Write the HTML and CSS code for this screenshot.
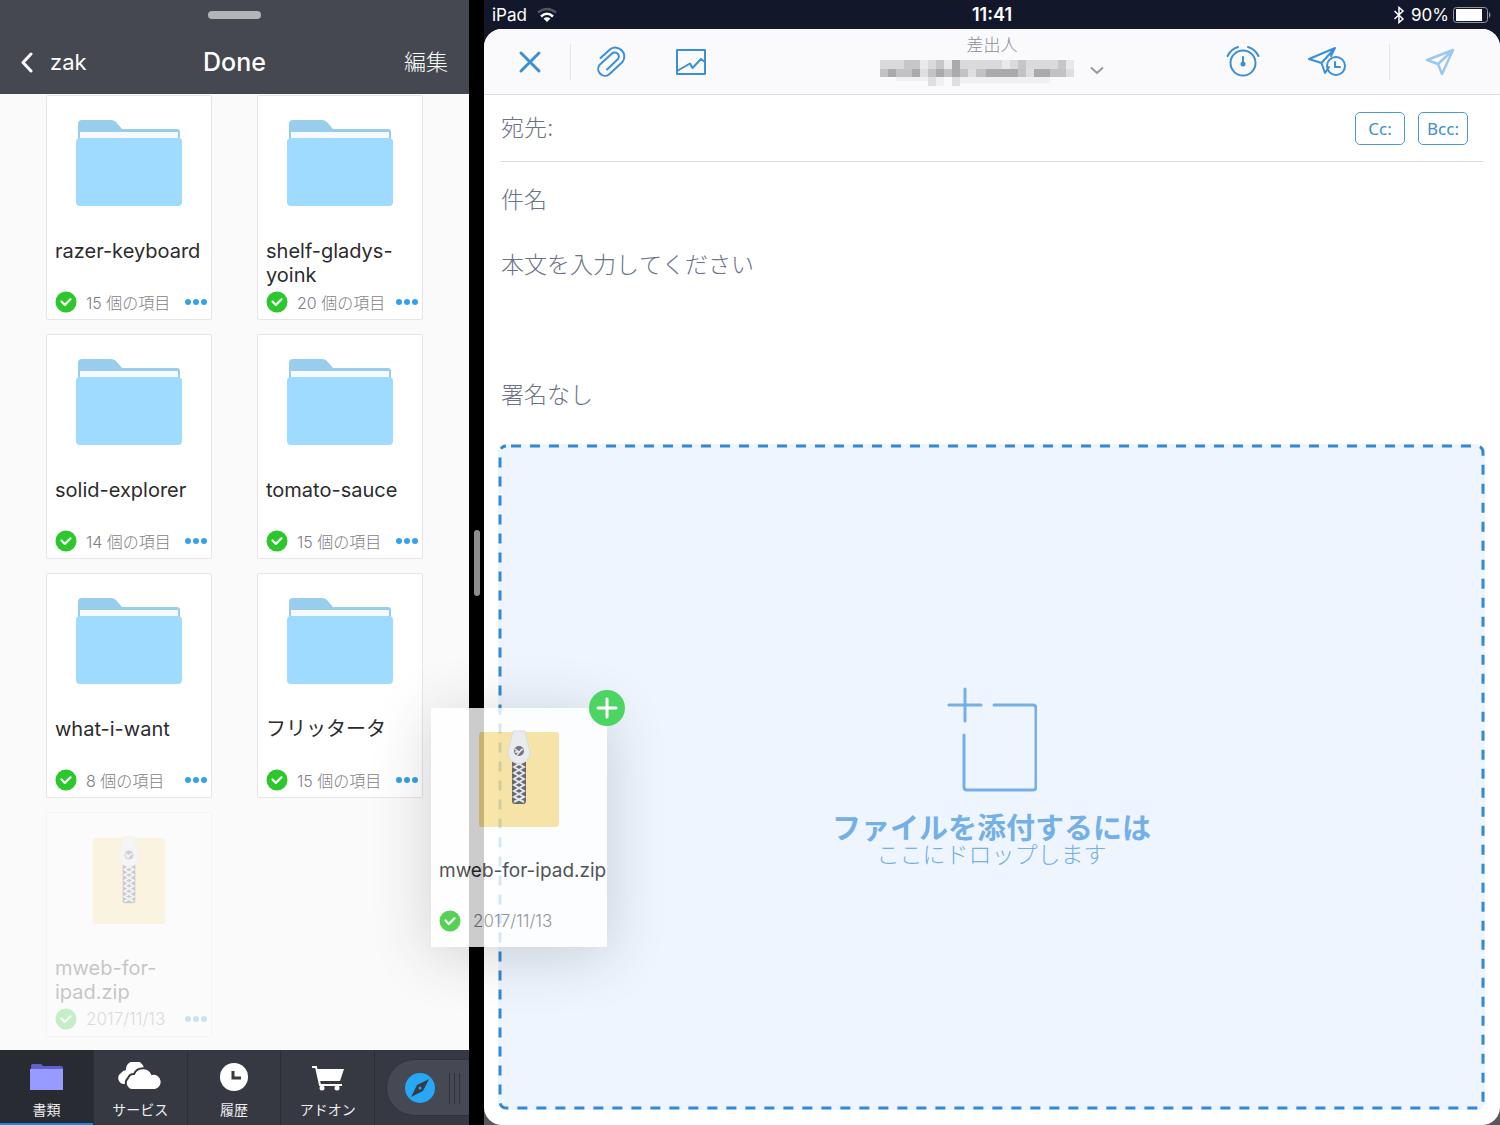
FILE: index.html
```html
<!DOCTYPE html>
<html lang="ja">
<head>
<meta charset="utf-8">
<meta name="viewport" content="width=device-width, initial-scale=1">
<title>Done</title>
<link rel="stylesheet" href="styles.css">
</head>
<body>
<svg class="defs" aria-hidden="true">
  <symbol id="folder" viewBox="0 0 106 86">
    <path fill="#98cdee" d="M2 18V4Q2 0 6 0H35Q38 0 40 2L46 9H101Q104 9 104 12V22H2Z"/>
    <path fill="#f6f9fd" d="M4 12H102V19H4Z"/>
    <rect y="18" width="106" height="68" rx="4" fill="#9fdbff"/>
  </symbol>
  <symbol id="check" viewBox="0 0 22 22">
    <circle cx="11" cy="11" r="10.500" fill="#2cc72d"/>
    <path d="M6.500 10.500l3.300 3.400 5.700-5.600" fill="none" stroke="#fff" stroke-width="2.200" stroke-linecap="round" stroke-linejoin="round"/>
  </symbol>
  <symbol id="dots" viewBox="0 0 22 6">
    <circle cx="3" cy="3" r="3"/><circle cx="11" cy="3" r="3"/><circle cx="19" cy="3" r="3"/>
  </symbol>
  <symbol id="zip" viewBox="0 0 80 97">
    <rect y="2" width="80" height="95" rx="3" fill="#f8df92"/>
    <rect x="33" y="24" width="14" height="50" rx="3" fill="#45454b"/>
    <path d="M35 31l10 6-10 6 10 6-10 6 10 6-10 6 10 5M45 31l-10 6 10 6-10 6 10 6-10 6 10 6-10 5" fill="none" stroke="#e3e3e8" stroke-width="2"/>
    <path d="M34 1H46L50 18A11 11 0 1 1 30 18Z" fill="#e9e9eb" stroke="#d8d5cf" stroke-width="1"/>
    <circle cx="40" cy="21" r="5" fill="#55565c"/>
    <path d="M36 19l4 3 4-3M38 25l5-6M36 22h4" stroke="#e9e9eb" stroke-width="1.500" fill="none"/>
  </symbol>
</svg>

<div class="split">
  <section class="files">
    <header class="files-header">
      <span class="grabber"></span>
      <div class="files-nav">
        <a class="back" href="#">
          <svg width="13" height="21" viewBox="0 0 13 21" fill="none" stroke="#fff" stroke-width="3" stroke-linecap="round" stroke-linejoin="round"><path d="M10 2L2 10.500L10 19"/></svg>
          <span>zak</span>
        </a>
        <h1>Done</h1>
        <button class="edit" type="button">編集</button>
      </div>
    </header>

    <main class="grid">
      <article class="card">
        <svg class="thumb"><use href="#folder"/></svg>
        <h2 class="name">razer-keyboard</h2>
        <div class="meta"><svg class="check"><use href="#check"/></svg><span class="count">15 個の項目</span><button class="more" type="button" aria-label="その他"><svg class="dots"><use href="#dots"/></svg></button></div>
      </article>
      <article class="card">
        <svg class="thumb"><use href="#folder"/></svg>
        <h2 class="name">shelf-gladys-yoink</h2>
        <div class="meta"><svg class="check"><use href="#check"/></svg><span class="count">20 個の項目</span><button class="more" type="button" aria-label="その他"><svg class="dots"><use href="#dots"/></svg></button></div>
      </article>
      <article class="card">
        <svg class="thumb"><use href="#folder"/></svg>
        <h2 class="name">solid-explorer</h2>
        <div class="meta"><svg class="check"><use href="#check"/></svg><span class="count">14 個の項目</span><button class="more" type="button" aria-label="その他"><svg class="dots"><use href="#dots"/></svg></button></div>
      </article>
      <article class="card">
        <svg class="thumb"><use href="#folder"/></svg>
        <h2 class="name">tomato-sauce</h2>
        <div class="meta"><svg class="check"><use href="#check"/></svg><span class="count">15 個の項目</span><button class="more" type="button" aria-label="その他"><svg class="dots"><use href="#dots"/></svg></button></div>
      </article>
      <article class="card">
        <svg class="thumb"><use href="#folder"/></svg>
        <h2 class="name">what-i-want</h2>
        <div class="meta"><svg class="check"><use href="#check"/></svg><span class="count">8 個の項目</span><button class="more" type="button" aria-label="その他"><svg class="dots"><use href="#dots"/></svg></button></div>
      </article>
      <article class="card">
        <svg class="thumb"><use href="#folder"/></svg>
        <h2 class="name">フリッタータ</h2>
        <div class="meta"><svg class="check"><use href="#check"/></svg><span class="count">15 個の項目</span><button class="more" type="button" aria-label="その他"><svg class="dots"><use href="#dots"/></svg></button></div>
      </article>
      <article class="card lifted">
        <svg class="thumb"><use href="#zip"/></svg>
        <h2 class="name">mweb-for-ipad.zip</h2>
        <div class="meta"><svg class="check"><use href="#check"/></svg><span class="count date">2017/11/13</span><button class="more" type="button" aria-label="その他"><svg class="dots"><use href="#dots"/></svg></button></div>
      </article>
    </main>

    <nav class="tabs">
      <a class="tab active" href="#">
        <svg width="44" height="30" viewBox="0 0 44 30"><path fill="#5f61cd" d="M7 8V4Q7 2 9 2H17L19 4H37Q39 4 39 6V8Z"/><path fill="#979bff" d="M6 7H39V28H6Z"/></svg>
        <span>書類</span>
      </a>
      <a class="tab" href="#">
        <svg width="44" height="30" viewBox="0 0 44 30"><path fill="#fff" d="M11 22H7A6 6 0 0 1 3 11A7 7 0 0 1 8 8A9 8 0 0 1 26 6L11 22Z"/><path fill="#fff" stroke="#363942" stroke-width="2" d="M14 28A7 7 0 0 1 10 16A6 6 0 0 1 16 12A10 10 0 0 1 34 12A8 8 0 0 1 37 28Z"/></svg>
        <span>サービス</span>
      </a>
      <a class="tab" href="#">
        <svg width="44" height="30" viewBox="0 0 44 30"><circle cx="22" cy="15" r="14" fill="#fff"/><path d="M21 9V16H29" fill="none" stroke="#363942" stroke-width="3"/></svg>
        <span>履歴</span>
      </a>
      <a class="tab" href="#">
        <svg width="44" height="30" viewBox="0 0 44 30"><path d="M6 5H10L14 23H36" fill="none" stroke="#fff" stroke-width="2"/><path fill="#fff" d="M10 7H38L34 19H13Z"/><circle cx="16" cy="26" r="2.500" fill="#fff"/><circle cx="31" cy="26" r="2.500" fill="#fff"/></svg>
        <span>アドオン</span>
      </a>
      <div class="browser">
        <button class="pill" type="button" aria-label="ブラウザ">
          <svg width="80" height="32" viewBox="0 0 80 32"><circle cx="16" cy="16" r="15" fill="#26a8f4"/><path fill="#363b45" fill-rule="evenodd" d="M25 7L19 19L7 25L13 13ZM16 14.500a1.500 1.500 0 1 0 0 3a1.500 1.500 0 0 0 0-3"/><path d="M45.500 1V32M50.500 1V32M55.500 1V32" stroke="#2e3139" stroke-width="1"/></svg>
        </button>
      </div>
    </nav>
  </section>

  <div class="divider"><span class="handle"></span></div>

  <section class="mail">
    <div class="status">
      <div class="status-left">
        <span>iPad</span>
        <svg width="20" height="16" viewBox="0 0 20 16" fill="none" stroke-width="2.500"><path d="M1 5.500Q10-1.500 19 5.500" stroke="#525665"/><path d="M4 9.500Q10 4 16 9.500" stroke="#fff"/><path fill="#fff" d="M6.500 11.500Q10 9 13.500 11.500L10 15Z"/></svg>
      </div>
      <strong>11:41</strong>
      <div class="status-right">
        <svg width="12" height="18" viewBox="0 0 12 18" fill="none" stroke="#fff" stroke-width="1.500"><path d="M1.500 5L10 13L6 16.500V1.500L10 5L1.500 13"/></svg>
        <span>90%</span>
        <svg width="40" height="18" viewBox="0 0 40 18"><rect x="1.500" y="1.500" width="34" height="15" rx="3" fill="none" stroke="#9496a0" stroke-width="1"/><rect x="4" y="3" width="26" height="12" fill="#fff"/><path fill="#9496a0" d="M37 6Q40 9 37 12Z"/></svg>
      </div>
    </div>

    <form class="sheet">
      <header class="toolbar">
        <div class="tools">
          <button class="tool close" type="button" aria-label="閉じる"><svg width="24" height="24" viewBox="0 0 24 24"><path stroke-width="3" d="M3 3L21 21M21 3L3 21"/></svg></button>
          <button class="tool clip" type="button" aria-label="添付"><svg width="32" height="34" viewBox="0 0 32 34"><path d="M5.500 13L15.500 4A9 9 0 0 1 27.500 17L14 29.500A6.800 6.800 0 0 1 4.500 20L17 8.500A4 4 0 0 1 22.500 14.500L12 24.500"/></svg></button>
          <button class="tool picture" type="button" aria-label="画像"><svg width="32" height="26" viewBox="0 0 32 26"><path d="M2 1H30V25H2ZM2 22L15 14.500L17.500 19L26 10L30 13"/></svg></button>
        </div>
        <div class="sender">
          <span class="sender-label">差出人</span>
          <button class="sender-address" type="button" aria-label="差出人を変更">
            <svg width="194" height="26" viewBox="0 0 194 26" shape-rendering="crispEdges">
              <path fill="#dadadc" d="M0 0H194V9H0Z"/>
              <path fill="#c2c2c4" d="M0 9H194V17H0Z"/>
              <path fill="#c6c6c8" d="M24 0h16v9h-16zM56 0h8v9h-8zM72 0h8v9h-8zM138 0h8v9h-8zM178 0h8v9h-8z"/>
              <path fill="#e9e9eb" d="M40 0h8v9h-8zM64 0h8v9h-8zM122 0h8v9h-8zM186 0h8v9h-8z"/>
              <path fill="#aaaaac" d="M8 9h8v8h-8zM32 9h8v8h-8zM56 9h8v8h-8zM72 0h8v17h-8zM106 9h32v8h-32zM154 9h16v8h-16z"/>
              <path fill="#dededf" d="M40 9h8v8h-8zM88 9h8v8h-8zM146 9h8v8h-8zM186 9h8v8h-8zM48 17h8v9h-8zM72 17h8v9h-8z"/>
              <path fill="#f0f0f2" d="M16 17h32v4h-32zM56 17h8v9h-8zM80 17h90v6h-90z"/>
            </svg>
            <svg class="chevron" width="14" height="9" viewBox="0 0 14 9" fill="none" stroke="#96979d" stroke-width="2"><path d="M1 1.500L7 7L13 1.500"/></svg>
          </button>
        </div>
        <div class="tools tools-end">
          <button class="tool alarm" type="button" aria-label="リマインダー"><svg width="34" height="34" viewBox="0 0 34 34"><circle cx="17" cy="18" r="12.500"/><path d="M1.500 11Q5 4 12 2M22 2Q29 4 32.500 11M17 12V19"/><circle cx="17" cy="19" r="1.500" fill="#3a8fd6"/></svg></button>
          <button class="tool later" type="button" aria-label="後で送信"><svg width="40" height="32" viewBox="0 0 40 32"><path d="M18 27L14.500 17L2 13L28 2L24 10M14.500 17L28 2M18 27L22 21"/><circle cx="29" cy="20" r="9"/><path d="M28 16V21H33"/></svg></button>
          <button class="tool send" type="submit" aria-label="送信" disabled><svg width="30" height="30" viewBox="0 0 30 30"><path stroke-width="2.500" d="M2 13L28 3L17 27L13 17ZM13 17L28 3"/></svg></button>
        </div>
      </header>

      <div class="to-row">
        <label for="to">宛先:</label>
        <input id="to" type="text">
        <button class="cc" type="button">Cc:</button>
        <button class="cc" type="button">Bcc:</button>
      </div>
      <input class="subject" type="text" placeholder="件名" aria-label="件名">
      <textarea class="message" placeholder="本文を入力してください" aria-label="本文"></textarea>
      <p class="signature">署名なし</p>

      <div class="dropzone">
        <svg class="outline" aria-hidden="true"><rect class="outline-rect" x="2" y="2" rx="6"/></svg>
        <svg width="90" height="105" viewBox="0 0 90 105" fill="none" stroke="#74b0e6" stroke-width="3" stroke-linecap="round"><path d="M2 18H34M18 2V34M47 18H86Q89 18 89 21V100Q89 103 86 103H20Q17 103 17 100V48"/></svg>
        <strong>ファイルを添付するには</strong>
        <span>ここにドロップします</span>
      </div>
    </form>
  </section>

  <div class="drag">
    <article class="drag-card">
      <svg class="drag-thumb"><use href="#zip"/></svg>
      <h2 class="name">mweb-for-ipad.zip</h2>
      <div class="meta"><svg class="check"><use href="#check"/></svg><span class="count date">2017/11/13</span></div>
    </article>
    <svg class="plus" viewBox="0 0 36 36"><circle cx="18" cy="18" r="18" fill="#4cd562"/><path d="M18 9V27M9 18H27" stroke="#fff" stroke-width="3" stroke-linecap="round"/></svg>
  </div>
</div>
</body>
</html>
```
FILE: styles.css
```css
* {
  box-sizing: border-box;
}

body {
  margin: 0;
  font-family: Inter, "Noto Sans CJK JP", sans-serif;
  background: #000;
}

h1, h2, p {
  margin: 0;
  font-weight: 400;
}

button {
  padding: 0;
  border: 0;
  background: none;
  font-family: inherit;
  color: inherit;
}

a {
  color: inherit;
  text-decoration: none;
}

svg {
  display: block;
  flex: none;
}

.defs {
  position: absolute;
  width: 0;
  height: 0;
}

.split {
  position: relative;
  display: grid;
  grid-template-columns: 469fr 15px 1016fr;
  min-height: 100vh;
  overflow: hidden;
}

/* File browser */

.files {
  display: flex;
  flex-direction: column;
  min-width: 0;
  background: #fafafb;
}

.files-header {
  display: flex;
  flex-direction: column;
  align-items: center;
  height: 94px;
  padding-top: 11px;
  background: #454850;
  color: #fff;
}

.grabber {
  width: 53px;
  height: 8px;
  border-radius: 4px;
  background: #b4b5b9;
}

.files-nav {
  display: grid;
  grid-template-columns: 1fr auto 1fr;
  align-items: center;
  align-self: stretch;
  padding: 27px 21px 0;
  line-height: 32px;
}

.back {
  display: flex;
  align-items: center;
  gap: 16px;
  font-size: 22px;
}

.files-nav h1 {
  font-size: 25px;
  font-weight: 500;
}

.edit {
  justify-self: end;
  font-size: 22px;
  font-weight: 300;
  line-height: 30px;
}

.grid {
  flex: 1;
  display: grid;
  grid-template-columns: 1fr 1fr;
  align-content: start;
  gap: 14px 45px;
  padding: 1px 46px 13px;
}

.card {
  display: flex;
  flex-direction: column;
  height: 225px;
  padding: 23px 8px 5px;
  border: 1px solid #e6e6e8;
  border-radius: 2px;
  background: #fff;
}

.lifted {
  opacity: 0.25;
}

.thumb {
  align-self: center;
  width: 106px;
  height: 88px;
  margin-bottom: 32px;
}

.name {
  height: 52px;
  font-size: 20px;
  line-height: 24px;
  color: #2b2b2d;
}

.meta {
  display: flex;
  align-items: center;
  height: 22px;
  margin-right: -4px;
  font-size: 16px;
  font-weight: 300;
  color: #7e7e82;
}

.check {
  width: 22px;
  height: 22px;
  margin-right: 9px;
}

.count {
  flex: 1;
  white-space: nowrap;
}

.date {
  font-size: 17px;
}

.dots {
  width: 22px;
  height: 6px;
  fill: #38a0e8;
}

.tabs {
  display: grid;
  grid-template-columns: repeat(5, 1fr);
  height: 75px;
  background: #363942;
}

.tab {
  display: flex;
  flex-direction: column;
  align-items: center;
  gap: 8px;
  padding-top: 12px;
  border-right: 1px solid #2b2e36;
  font-size: 14px;
  line-height: 20px;
  color: #eee;
}

.active {
  background: #282b32;
  box-shadow: inset 0 -2px #1e88dc;
}

.browser {
  min-width: 0;
  overflow: hidden;
  padding: 9px 0 9px 11px;
}

.pill {
  width: 120px;
  height: 57px;
  padding-left: 17px;
  border: 1px solid #30333b;
  border-radius: 29px;
  background: #454954;
}

/* Split view divider */

.divider {
  display: flex;
  align-items: center;
  justify-content: center;
  background: #000;
}

.handle {
  width: 6px;
  height: 66px;
  border-radius: 3px;
  background: #8e8e90;
}

/* Mail composer */

.mail {
  display: flex;
  flex-direction: column;
  min-width: 0;
  background: linear-gradient(#12172a 60px, #5b565c 60px);
}

.status {
  display: grid;
  grid-template-columns: 1fr auto 1fr;
  align-items: center;
  height: 29px;
  padding: 0 8px;
  font-size: 17px;
  color: #fff;
}

.status strong {
  font-size: 18px;
  font-weight: 600;
}

.status-left,
.status-right {
  display: flex;
  align-items: center;
  gap: 10px;
}

.status-right {
  justify-content: end;
  gap: 6px;
}

.status-right span + svg {
  margin-left: -3px;
}

.sheet {
  flex: 1;
  display: flex;
  flex-direction: column;
  overflow: hidden;
  border-radius: 18px;
  background: #fff;
}

.toolbar {
  display: grid;
  grid-template-columns: 1fr auto 1fr;
  align-items: center;
  height: 66px;
  border-bottom: 1px solid #dcdce0;
  background: #fafafc;
}

.tools {
  display: flex;
  align-items: center;
  padding-left: 16px;
}

.tools-end {
  justify-content: end;
  padding: 0 30px 0 0;
}

.tool {
  display: flex;
  align-items: center;
  justify-content: center;
  width: 60px;
  height: 36px;
  fill: none;
  stroke: #3a8fd6;
  stroke-width: 2;
  stroke-linecap: round;
  stroke-linejoin: round;
}

.close,
.later {
  box-sizing: content-box;
  border-right: 1px solid #e4e4e8;
}

.close {
  padding-right: 10px;
  margin-right: 10px;
}

.picture {
  margin-left: 20px;
}

.later {
  padding-right: 32px;
  margin: 0 20px 0 24px;
}

.send {
  stroke: #9cc8ee;
}

.sender {
  display: flex;
  flex-direction: column;
  align-items: center;
  gap: 3px;
  padding-bottom: 4px;
}

.sender-label {
  font-size: 17px;
  font-weight: 300;
  line-height: 24px;
  color: #8b8c92;
}

.sender-address {
  display: flex;
  align-items: center;
  gap: 16px;
}

.chevron {
  margin-bottom: 6px;
}

.to-row {
  display: flex;
  align-items: center;
  gap: 13px;
  height: 67px;
  margin: 0 17px;
  padding-right: 15px;
  border-bottom: 1px solid #dcdce0;
}

.to-row label,
.to-row input,
.subject,
.message,
.signature {
  font-family: inherit;
  font-size: 23px;
  font-weight: 300;
  font-kerning: none;
  line-height: 34px;
  color: #6c7386;
}

.to-row input {
  flex: 1;
  min-width: 0;
  padding: 0;
  border: 0;
  outline: 0;
}

.cc {
  width: 50px;
  height: 33px;
  border: 1px solid #4a9ad4;
  border-radius: 5px;
  font-family: "Noto Sans", sans-serif;
  font-size: 17px;
  color: #3d8fce;
}

.subject,
.message {
  margin: 0 17px;
  padding: 0;
  border: 0;
  outline: 0;
  background: none;
}

.subject {
  height: 76px;
}

.message {
  height: 128px;
  padding-top: 10px;
  resize: none;
}

.subject::placeholder,
.message::placeholder {
  color: #6c7386;
  opacity: 1;
}

.signature {
  margin: 12px 17px 32px;
}

.dropzone {
  position: relative;
  flex: 1;
  display: flex;
  flex-direction: column;
  align-items: center;
  justify-content: center;
  margin: 0 15px 15px 14px;
  border-radius: 8px;
  background: #eef5fe;
  color: #74b0e6;
}

.outline {
  position: absolute;
  inset: 0;
  width: 100%;
  height: 100%;
}

.outline-rect {
  width: calc(100% - 4px);
  height: calc(100% - 4px);
  fill: none;
  stroke: #3389d3;
  stroke-width: 3;
  stroke-dasharray: 10 9;
  stroke-dashoffset: 14;
}

.dropzone strong {
  margin-top: 23px;
  font-size: 29px;
  line-height: 28px;
}

.dropzone span {
  font-size: 23px;
  font-weight: 300;
  line-height: 24px;
}

/* File being dragged between the two apps */

.drag {
  position: absolute;
  top: 708px;
  left: 431px;
}

.drag-card {
  display: flex;
  flex-direction: column;
  width: 176px;
  height: 239px;
  padding: 22px 0 0 8px;
  background: #fff;
  box-shadow: 0 8px 60px rgba(0, 0, 0, 0.2);
  opacity: 0.8;
}

.drag-thumb {
  width: 80px;
  height: 97px;
  margin: 0 0 32px 40px;
}

.drag-card .name {
  height: 51px;
  font-size: 19px;
  white-space: nowrap;
}

.drag-card .count {
  margin-left: 3px;
}

.plus {
  position: absolute;
  top: -18px;
  right: -18px;
  width: 36px;
  height: 36px;
}
```
